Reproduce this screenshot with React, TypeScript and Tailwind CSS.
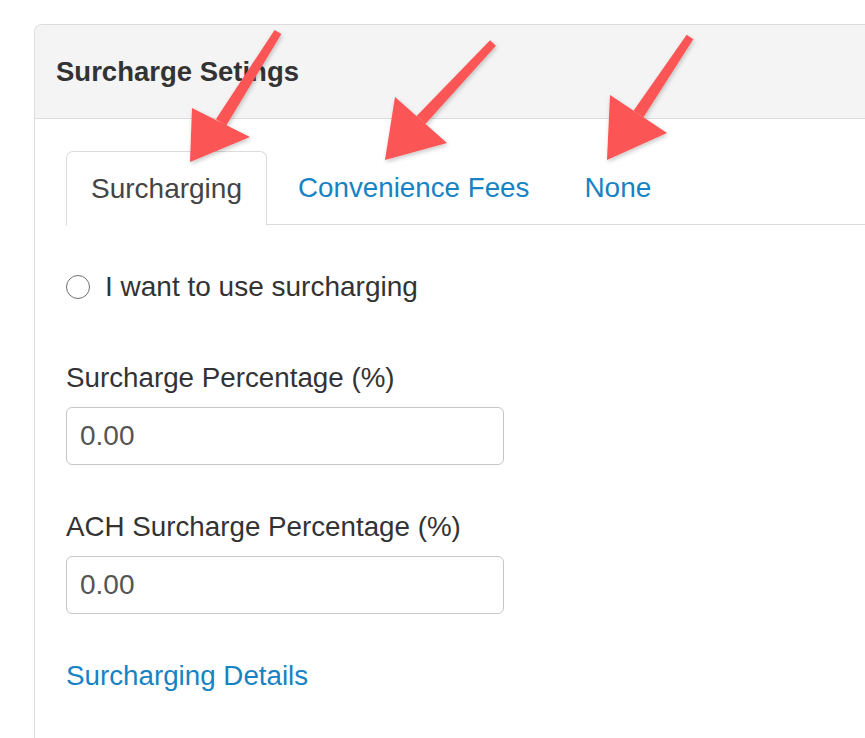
import React from "react";

export default function App() {
  return (
    <div className="relative w-[865px] h-[738px] overflow-hidden bg-white font-['Liberation_Sans',Arial,sans-serif] text-[#333]">
      <div className="pt-[24px] pl-[34px]">
        <div className="w-[900px] h-[760px] border-l border-t border-[#dcdcdc] rounded-tl-[8px]">
          <div className="h-[94px] bg-[#f4f4f4] border-b border-[#dcdcdc] rounded-tl-[8px] pl-[21px] flex items-center">
            <h2 className="text-[27.5px] font-bold text-[#333] leading-none">Surcharge Setings</h2>
          </div>
          <div className="pl-[31px] pt-[32px]">
            <div className="flex border-b border-[#dcdcdc] h-[74px] text-[28px]">
              <div className="-mb-px h-[75px] w-[201px] bg-white border border-[#dcdcdc] border-b-white rounded-t-[7px] flex items-center justify-center text-[#444]">
                Surcharging
              </div>
              <div className="ml-[5px] h-[74px] px-[26px] flex items-center text-[#1783c4] text-[27.75px]">Convenience Fees</div>
              <div className="ml-[3px] h-[74px] px-[26px] flex items-center text-[#1783c4]">None</div>
            </div>

            <div className="mt-[42px] flex items-center h-[40px] text-[28px] leading-[40px]">
              <span className="w-[24px] h-[24px] rounded-full border-[1.5px] border-[#707070] bg-white"></span>
              <span className="ml-[15px] text-[#333]">I want to use surcharging</span>
            </div>

            <div className="mt-[51px] text-[27.75px] leading-[40px] text-[#333]">Surcharge Percentage (%)</div>
            <div className="mt-[9px] w-[438px] h-[58px] border-[1.5px] border-[#c6c6c6] rounded-[6px] flex items-center pl-[13px] text-[28px] text-[#555]">
              0.00
            </div>

            <div className="mt-[42px] text-[27.75px] leading-[40px] text-[#333]">ACH Surcharge Percentage (%)</div>
            <div className="mt-[9px] w-[438px] h-[58px] border-[1.5px] border-[#c6c6c6] rounded-[6px] flex items-center pl-[13px] text-[28px] text-[#555]">
              0.00
            </div>

            <div className="mt-[42px] text-[27.75px] leading-[40px] text-[#1783c4]">Surcharging Details</div>
          </div>
        </div>
      </div>

      <svg className="absolute left-0 top-0 pointer-events-none" width="865" height="738" viewBox="0 0 865 738">
        <defs>
          <filter id="sh" x="-20%" y="-20%" width="140%" height="140%">
            <feDropShadow dx="1" dy="2" stdDeviation="2" floodColor="#000" floodOpacity="0.22" />
          </filter>
        </defs>
        <g fill="#fb5454" filter="url(#sh)">
          <polygon points="274.6,29.9 281.4,34.1 226.1,125.7 215.9,119.3" />
          <polygon points="190,162 192,108 250,137" />
          <polygon points="490.1,40.3 495.9,45.7 425.4,124.1 416.6,115.9" />
          <polygon points="385,160 395,97 447,143" />
          <polygon points="686.7,34.8 693.3,39.2 643.5,117.3 633.5,110.7" />
          <polygon points="607,160 610,95 667,133" />
        </g>
      </svg>
    </div>
  );
}
